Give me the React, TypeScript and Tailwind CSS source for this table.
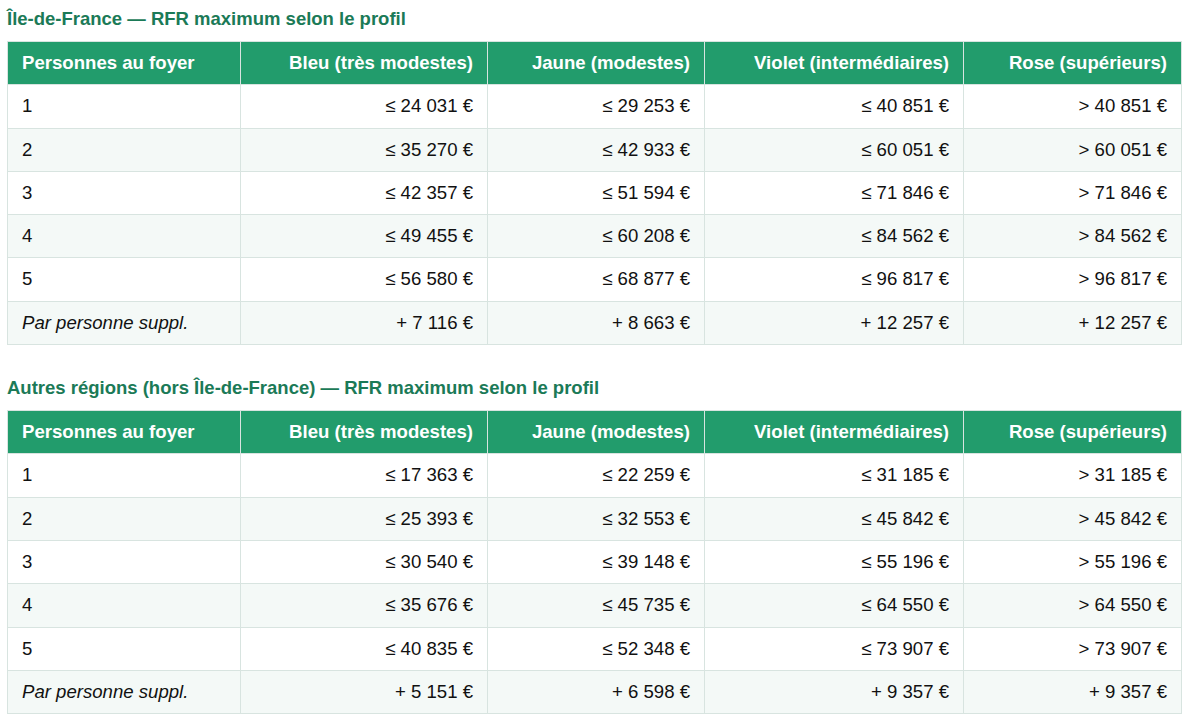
const COLS = [
  "Personnes au foyer",
  "Bleu (très modestes)",
  "Jaune (modestes)",
  "Violet (intermédiaires)",
  "Rose (supérieurs)",
];

const WIDTHS = ["w-[233px]", "w-[247px]", "w-[217px]", "w-[259px]", "w-[218px]"];

type Row = [string, string, string, string, string];

const IDF: Row[] = [
  ["1", "≤ 24 031 €", "≤ 29 253 €", "≤ 40 851 €", "> 40 851 €"],
  ["2", "≤ 35 270 €", "≤ 42 933 €", "≤ 60 051 €", "> 60 051 €"],
  ["3", "≤ 42 357 €", "≤ 51 594 €", "≤ 71 846 €", "> 71 846 €"],
  ["4", "≤ 49 455 €", "≤ 60 208 €", "≤ 84 562 €", "> 84 562 €"],
  ["5", "≤ 56 580 €", "≤ 68 877 €", "≤ 96 817 €", "> 96 817 €"],
  ["Par personne suppl.", "+ 7 116 €", "+ 8 663 €", "+ 12 257 €", "+ 12 257 €"],
];

const AUTRES: Row[] = [
  ["1", "≤ 17 363 €", "≤ 22 259 €", "≤ 31 185 €", "> 31 185 €"],
  ["2", "≤ 25 393 €", "≤ 32 553 €", "≤ 45 842 €", "> 45 842 €"],
  ["3", "≤ 30 540 €", "≤ 39 148 €", "≤ 55 196 €", "> 55 196 €"],
  ["4", "≤ 35 676 €", "≤ 45 735 €", "≤ 64 550 €", "> 64 550 €"],
  ["5", "≤ 40 835 €", "≤ 52 348 €", "≤ 73 907 €", "> 73 907 €"],
  ["Par personne suppl.", "+ 5 151 €", "+ 6 598 €", "+ 9 357 €", "+ 9 357 €"],
];

export default function App() {
  return (
    <div className="min-h-screen bg-white px-[7px] pt-[8px] font-['Liberation_Sans',Arial,sans-serif] text-[18.6px] text-[#111]">
      <IncomeTable title="Île-de-France — RFR maximum selon le profil" rows={IDF} />
      <div className="h-[32px]" />
      <IncomeTable title="Autres régions (hors Île-de-France) — RFR maximum selon le profil" rows={AUTRES} />
    </div>
  );
}

/* ── Sub-components ── */

function IncomeTable({ title, rows }: { title: string; rows: Row[] }) {
  return (
    <section>
      <h3 className="mb-[12px] text-[18.5px] font-bold leading-[21px] text-[#1b7a57]">{title}</h3>
      <table className="w-[1174px] table-fixed border-collapse">
        <colgroup>
          {WIDTHS.map((w, i) => (
            <col key={i} className={w} />
          ))}
        </colgroup>
        <thead>
          <tr className="bg-[#229c6c] text-white">
            {COLS.map((c, i) => (
              <th
                key={c}
                className={`border border-[#d8e4e0] px-[14px] py-[11px] font-bold leading-[20.3px] ${
                  i === 0 ? "text-left" : "text-right"
                }`}
              >
                {c}
              </th>
            ))}
          </tr>
        </thead>
        <tbody>
          {rows.map((r, ri) => (
            <tr key={ri} className={ri % 2 === 1 ? "bg-[#f4f9f7]" : "bg-white"}>
              {r.map((v, i) => (
                <td
                  key={i}
                  className={`border border-[#d8e4e0] px-[14px] py-[11px] leading-[20.3px] ${
                    i === 0 ? "text-left" : "text-right"
                  } ${i === 0 && ri === rows.length - 1 ? "italic" : ""}`}
                >
                  {v}
                </td>
              ))}
            </tr>
          ))}
        </tbody>
      </table>
    </section>
  );
}
